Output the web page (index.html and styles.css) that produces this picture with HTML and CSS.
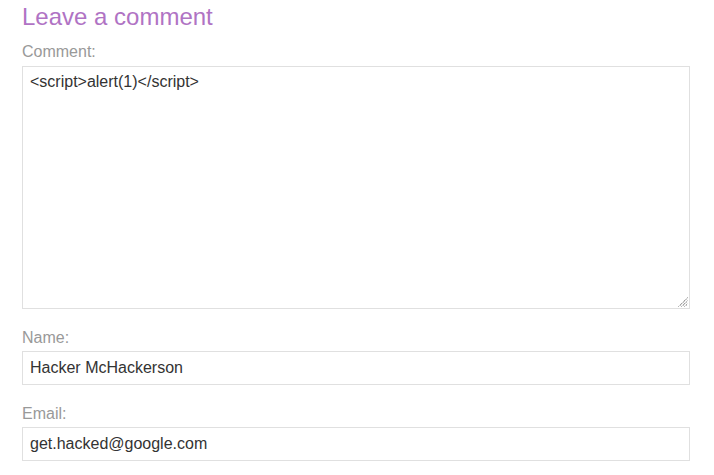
FILE: index.html
```html
<!DOCTYPE html>
<html>
<head>
<meta charset="utf-8">
<link rel="stylesheet" href="styles.css">
</head>
<body>
<section class="comment-form">
  <h2 class="title">Leave a comment</h2>
  <form class="form">
    <label class="label first" for="comment">Comment:</label>
    <div class="area-wrap">
      <textarea class="field area" id="comment"><script>alert(1)</script></textarea>
      <svg class="grip" width="10" height="10" viewBox="0 0 10 10" aria-hidden="true">
        <g stroke="#6f6f6f" stroke-width="1" stroke-dasharray="1 1" fill="none">
          <line x1="0.5" y1="9.5" x2="9.5" y2="0.5"/>
          <line x1="3.5" y1="9.5" x2="9.5" y2="3.5"/>
          <line x1="6.5" y1="9.5" x2="9.5" y2="6.5"/>
        </g>
        <g stroke="#a8a8a8" stroke-width="1" stroke-dasharray="1 1" stroke-dashoffset="1" fill="none">
          <line x1="1.5" y1="9.5" x2="9.5" y2="1.5"/>
          <line x1="4.5" y1="9.5" x2="9.5" y2="4.5"/>
          <line x1="7.5" y1="9.5" x2="9.5" y2="7.5"/>
        </g>
      </svg>
    </div>
    <label class="label" for="name">Name:</label>
    <input class="field input" id="name" type="text" value="Hacker McHackerson">
    <label class="label" for="email">Email:</label>
    <input class="field input" id="email" type="text" value="get.hacked@google.com">
  </form>
</section>
</body>
</html>
```
FILE: styles.css
```css
html, body {
  margin: 0;
  padding: 0;
  background: #fff;
}
body {
  font-family: "Liberation Sans", Arial, sans-serif;
}
.comment-form {
  padding: 3px 24px 0 22px;
  width: 668px;
}
.title {
  margin: 0;
  font-size: 24px;
  line-height: 28px;
  font-weight: normal;
  color: #b073c4;
}
.form {
  display: flex;
  flex-direction: column;
}
.label {
  display: block;
  font-size: 16px;
  line-height: 20px;
  color: #999;
  margin-top: 19px;
  margin-bottom: 3px;
}
.label.first {
  margin-top: 11px;
  margin-bottom: 4px;
}
.area-wrap {
  position: relative;
  width: 668px;
  height: 243px;
}
.grip {
  position: absolute;
  right: 2px;
  bottom: 2px;
  display: block;
}
.field {
  box-sizing: border-box;
  width: 668px;
  margin: 0;
  border: 1px solid #e0e0e0;
  border-radius: 0;
  font-family: "Liberation Sans", Arial, sans-serif;
  font-size: 16px;
  color: #333;
  background: #fff;
  outline: none;
}
.area {
  display: block;
  height: 243px;
  padding: 6px 7px 5px;
  line-height: 18px;
  resize: none;
}
.input {
  height: 34px;
  padding: 0 7px;
  line-height: 20px;
}
```
